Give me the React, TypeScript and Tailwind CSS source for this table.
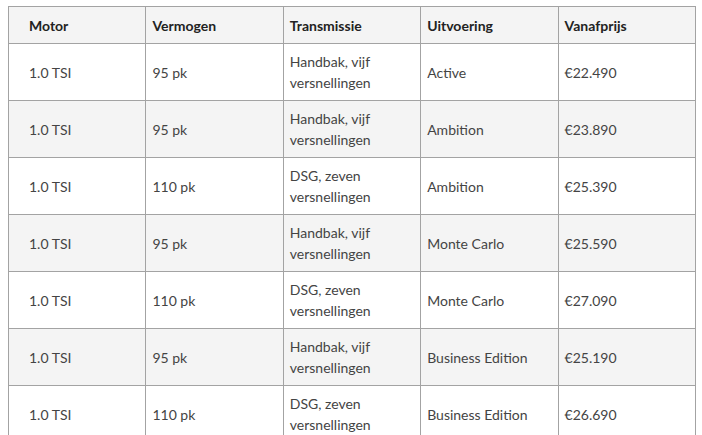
const rows = [
  ["1.0 TSI", "95 pk", "Handbak, vijf versnellingen", "Active", "€22.490"],
  ["1.0 TSI", "95 pk", "Handbak, vijf versnellingen", "Ambition", "€23.890"],
  ["1.0 TSI", "110 pk", "DSG, zeven versnellingen", "Ambition", "€25.390"],
  ["1.0 TSI", "95 pk", "Handbak, vijf versnellingen", "Monte Carlo", "€25.590"],
  ["1.0 TSI", "110 pk", "DSG, zeven versnellingen", "Monte Carlo", "€27.090"],
  ["1.0 TSI", "95 pk", "Handbak, vijf versnellingen", "Business Edition", "€25.190"],
  ["1.0 TSI", "110 pk", "DSG, zeven versnellingen", "Business Edition", "€26.690"],
];

const headers = ["Motor", "Vermogen", "Transmissie", "Uitvoering", "Vanafprijs"];

export default function App() {
  return (
    <div
      className="bg-white pl-2 pt-1.5 h-[435px] overflow-hidden"
      style={{ fontFamily: "Lato, 'Open Sans', sans-serif" }}
    >
      <table className="table-fixed w-[688px] border-collapse text-[14px] leading-[21px] text-[#444]">
        <thead>
          <tr className="bg-[#f4f4f4] h-[37px]">
            {headers.map((h, i) => (
              <th
                key={h}
                className={`border border-[#a3a3a3] text-left font-bold text-[#222] align-middle ${
                  i === 0 ? "pl-5" : "pl-1.5"
                }`}
              >
                {h}
              </th>
            ))}
          </tr>
        </thead>
        <tbody>
          {rows.map((r, ri) => (
            <tr key={ri} className={`h-[57px] ${ri % 2 === 1 ? "bg-[#f4f4f4]" : "bg-white"}`}>
              {r.map((c, ci) => (
                <td
                  key={ci}
                  className={`border border-[#a3a3a3] align-middle pr-2 ${
                    ci === 0 ? "pl-5" : "pl-1.5"
                  }`}
                >
                  {c}
                </td>
              ))}
            </tr>
          ))}
        </tbody>
      </table>
    </div>
  );
}
